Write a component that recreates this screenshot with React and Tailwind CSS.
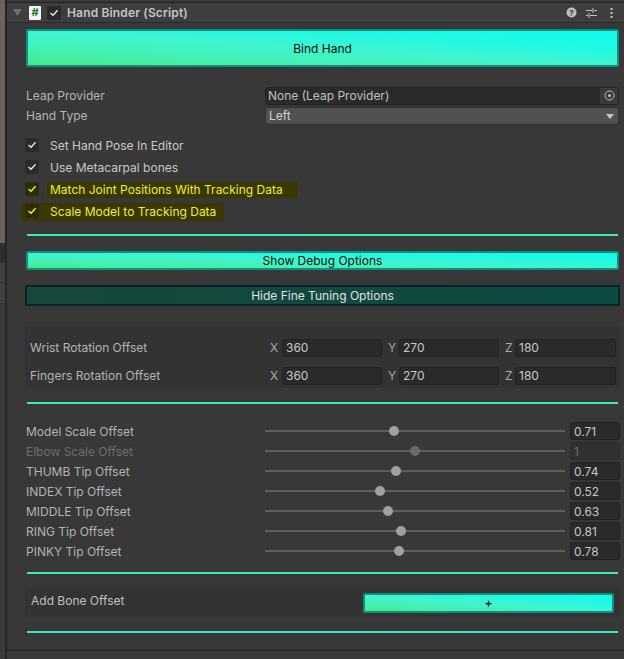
import React from "react";

const sans = { fontFamily: "Inter, 'Noto Sans', sans-serif" };
const grad = "bg-[linear-gradient(to_top_right,#46ea86_0%,#44f0b0_22%,#3ff4d0_50%,#22f8e2_72%,#10fbee_100%)]";

const Check = ({ hl }) => (
  <div className={"w-[14px] h-[14px] rounded-[2px] flex items-center justify-center border border-[#2a2a2a] " + (hl ? "bg-[#2f2d00]" : "bg-[#2a2a2a]")}>
    <svg width="10" height="10" viewBox="0 0 10 10" fill="none">
      <path d="M1.5 5 L4 7.2 L8.6 2.2" stroke={hl ? "#f4f040" : "#e8e8e8"} strokeWidth="1.4" />
    </svg>
  </div>
);

const Divider = () => <div className="h-[2px] ml-[20px] mr-[6px] bg-[#3ce8b8]"></div>;

const VecRow = ({ label }) => (
  <div className="flex items-center h-[18px] pl-[5px]">
    <span className="w-[238px] text-[#b4b4b4]">{label}</span>
    <span className="w-[14px] pl-[2px] text-[#a8a8a8]">X</span>
    <div className="w-[100px] h-[18px] rounded-[3px] bg-[#2a2a2a] border border-[#222] pl-[3px] text-[#c8c8c8] leading-[16px]">360</div>
    <span className="w-[17px] pl-[6px] text-[#a8a8a8]">Y</span>
    <div className="w-[100px] h-[18px] rounded-[3px] bg-[#2a2a2a] border border-[#222] pl-[3px] text-[#c8c8c8] leading-[16px]">270</div>
    <span className="w-[16px] pl-[6px] text-[#a8a8a8]">Z</span>
    <div className="w-[101px] h-[18px] rounded-[3px] bg-[#2a2a2a] border border-[#222] pl-[3px] text-[#c8c8c8] leading-[16px]">180</div>
  </div>
);

const sliders = [
  { label: "Model Scale Offset", thumb: 129, val: "0.71" },
  { label: "Elbow Scale Offset", thumb: 150, val: "1", off: true },
  { label: "THUMB Tip Offset", thumb: 131, val: "0.74" },
  { label: "INDEX Tip Offset", thumb: 115, val: "0.52" },
  { label: "MIDDLE Tip Offset", thumb: 123, val: "0.63" },
  { label: "RING Tip Offset", thumb: 136, val: "0.81" },
  { label: "PINKY Tip Offset", thumb: 134, val: "0.78" },
];

const SliderRow = ({ s }) => (
  <div className="flex items-center h-[20px]">
    <span className={"w-[239px] pt-[1px] " + (s.off ? "text-[#6e6e6e]" : "text-[#b4b4b4]")}>{s.label}</span>
    <div className="relative w-[300px] h-[2px] bg-[#5e5e5e]">
      <div
        className={"absolute top-[-4px] w-[10px] h-[10px] rounded-full " + (s.off ? "bg-[#6a6a6a]" : "bg-[#a0a0a0]")}
        style={{ left: s.thumb - 5 }}
      ></div>
    </div>
    <div className={"ml-[5px] w-[50px] h-[18px] rounded-[3px] border pl-[3px] leading-[17px] " + (s.off ? "bg-[#303030] border-[#2c2c2c] text-[#6a6a6a]" : "bg-[#2a2a2a] border-[#222] text-[#c8c8c8]")}>{s.val}</div>
  </div>
);

export default function App() {
  return (
    <div className="w-[624px] h-[659px] flex overflow-hidden bg-[#383838] text-[12px]" style={sans}>
      {/* strip of the window behind */}
      <div className="w-[5px] flex flex-col shrink-0">
        <div className="h-[243px] bg-[#6a635e]"></div>
        <div className="h-[20px] bg-[#2e2e2e]"></div>
        <div className="h-[20px] bg-[#414141] border-b border-[#333]"></div>
        <div className="h-[21px] bg-[#414141] border-b border-[#333]"></div>
        <div className="flex-1 bg-[#3a3a3a]"></div>
      </div>
      <div className="w-[2px] bg-[#252525] shrink-0"></div>
      <div className="flex-1 flex flex-col min-w-0">
        <div className="h-[3px] bg-[#383838] border-b border-[#1f1f1f]"></div>
        {/* header */}
        <div className="h-[20px] flex items-center bg-[#3e3e3e] border-b border-[#2a2a2a] pl-[6px] pr-[11px]">
          <svg width="9" height="7" viewBox="0 0 9 7" className="mr-[7px]"><path d="M0 0 H9 L4.5 7 Z" fill="#6f6f6f" /></svg>
          <div className="w-[12px] h-[14px] rounded-[1px] bg-[#f2f2f2] text-[#1f7a2f] text-[11px] font-bold flex items-center justify-center leading-none">#</div>
          <div className="ml-[6px]"><Check /></div>
          <span className="ml-[6px] pt-[1px] font-semibold tracking-[0.15px] text-[#c4c4c4]">Hand Binder (Script)</span>
          <div className="ml-auto flex items-center">
            <svg width="11" height="11" viewBox="0 0 11 11">
              <circle cx="5.5" cy="5.5" r="5" fill="#bdbdbd" />
              <text x="5.5" y="8.5" textAnchor="middle" fontSize="8" fontWeight="700" fill="#3e3e3e">?</text>
            </svg>
            <svg width="11" height="10" viewBox="0 0 11 10" fill="none" stroke="#c4c4c4" strokeWidth="1" className="ml-[9px]">
              <path d="M0 2.5 H6 M8 2.5 H11 M7 0 V5 M0 7.5 H2 M4 7.5 H11 M3 5 V10" />
            </svg>
            <svg width="3" height="10" viewBox="0 0 3 10" fill="#c4c4c4" className="ml-[13px]">
              <rect x="0.5" y="0" width="2" height="2" /><rect x="0.5" y="4" width="2" height="2" /><rect x="0.5" y="8" width="2" height="2" />
            </svg>
          </div>
        </div>

        <div className="pl-[19px] pr-[2px]">
          <div className={"mt-[6px] mr-[3px] h-[38px] pt-[1px] rounded-[2px] border-2 border-[#0f8f80] flex items-center justify-center text-[#101010] " + grad}>Bind Hand</div>

          {/* fields */}
          <div className="mt-[19px] flex items-center h-[19px]">
            <span className="w-[239px] text-[#b4b4b4]">Leap Provider</span>
            <div className="flex-1 h-[18px] rounded-[3px] bg-[#2a2a2a] border border-[#222] flex items-center pl-[2px] text-[#c0c0c0] mr-[3px]">
              <span>None (Leap Provider)</span>
              <div className="ml-auto w-[18px] h-full bg-[#3a3a3a] flex items-center justify-center">
                <svg width="11" height="11" viewBox="0 0 11 11" fill="none">
                  <circle cx="5.5" cy="5.5" r="4.5" stroke="#c0c0c0" strokeWidth="1" />
                  <circle cx="5.5" cy="5.5" r="1.5" fill="#c0c0c0" />
                </svg>
              </div>
            </div>
          </div>
          <div className="mt-[2px] flex items-center h-[18px]">
            <span className="w-[239px] text-[#b4b4b4]">Hand Type</span>
            <div className="flex-1 h-[18px] rounded-[3px] bg-[#515151] border border-[#303030] flex items-center pl-[3px] pr-[4px] text-[#d0d0d0] mr-[3px]">
              <span className="pb-[1px]">Left</span>
              <svg width="8" height="5" viewBox="0 0 8 5" className="ml-auto"><path d="M0 0 H8 L4 5 Z" fill="#c8c8c8" /></svg>
            </div>
          </div>

          {/* toggles */}
          <div className="mt-[9px] flex flex-col">
            <div className="h-[22px] flex items-center text-[#c8c8c8] -ml-[1px]"><Check /><span className="ml-[11px] pt-[2px]">Set Hand Pose In Editor</span></div>
            <div className="h-[22px] flex items-center text-[#c8c8c8] -ml-[1px]"><Check /><span className="ml-[11px] pt-[2px]">Use Metacarpal bones</span></div>
            <div className="h-[22px] flex items-center text-[#f0ee3c] -ml-[1px]">
              <Check hl />
              <span className="ml-[8px] mt-[2px] pl-[3px] pr-[15px] h-[16px] leading-[16px] bg-[#3a3800]">Match Joint Positions With Tracking Data</span>
            </div>
            <div className="h-[22px] flex items-center text-[#f0ee3c] -ml-[5px]">
              <div className="flex items-center h-[18px] mt-[2px] pl-[4px] pr-[8px] bg-[#3a3800]">
                <div className="-mt-[2px]"><Check hl /></div>
                <span className="ml-[11px]">Scale Model to Tracking Data</span>
              </div>
            </div>
          </div>
        </div>

        <div className="mt-[12px]"><Divider /></div>

        <div className="pl-[19px] pr-[5px]">
          <div className={"mt-[15px] h-[19px] rounded-[2px] border-2 border-[#0f8f80] flex items-center justify-center text-[#101010] " + grad}>Show Debug Options</div>
          <div className="mt-[15px] -mx-[1px] h-[21px] border-2 border-[#062523] bg-[linear-gradient(100deg,#17483c,#0c4a42)] flex items-center justify-center text-[#e0e0e0]">Hide Fine Tuning Options</div>
        </div>

        {/* rotation offsets */}
        <div className="mt-[20px] ml-[18px] mr-[4px] h-[62px] pt-[10px] bg-[#333333] flex flex-col justify-center gap-[10px]">
          <VecRow label="Wrist Rotation Offset" />
          <VecRow label="Fingers Rotation Offset" />
        </div>

        <div className="mt-[14px]"><Divider /></div>

        {/* sliders */}
        <div className="mt-[17px] pl-[19px] flex flex-col">
          {sliders.map((s) => <SliderRow key={s.label} s={s} />)}
        </div>

        <div className="mt-[11px]"><Divider /></div>

        <div className="mt-[14px] ml-[18px] mr-[4px] h-[29px] bg-[#333333] flex items-center pl-[6px] pr-[6px]">
          <span className="pb-[3px] text-[#c0c0c0]">Add Bone Offset</span>
          <div className={"ml-auto w-[251px] h-[20px] rounded-[2px] border-2 border-[#0f8f80] flex items-center justify-center text-[#101010] font-semibold " + grad}>+</div>
        </div>

        <div className="mt-[14px]"><Divider /></div>

        <div className="mt-[17px] flex-1 border-t border-[#222] bg-[#3a3a3a]"></div>
      </div>
    </div>
  );
}
